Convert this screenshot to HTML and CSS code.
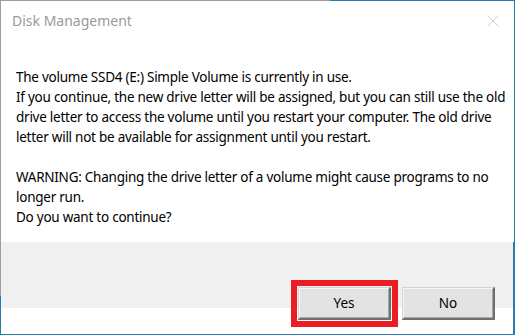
FILE: index.html
```html
<!DOCTYPE html>
<html>
<head>
<meta charset="utf-8">
<link rel="stylesheet" href="styles.css">
</head>
<body>
<div class="window">
  <div class="titlebar">
    <span class="title">Disk Management</span>
    <svg class="close" width="12" height="12" viewBox="0 0 12 12"><path d="M0.5 0.5 L11.5 11.5 M11.5 0.5 L0.5 11.5" stroke="#cfcfcf" stroke-width="1" fill="none"/></svg>
  </div>
  <div class="message">
    <p>The volume SSD4 (E:) Simple Volume is currently in use.<br>If you continue, the new drive letter will be assigned, but you can still use the old<br>drive letter to access the volume until you restart your computer. The old drive<br>letter will not be available for assignment until you restart.</p>
    <p>WARNING: Changing the drive letter of a volume might cause programs to no<br>longer run.<br>Do you want to continue?</p>
  </div>
  <div class="footer">
    <button class="btn btn-marked">Yes</button>
    <button class="btn">No</button>
  </div>
</div>
</body>
</html>
```
FILE: styles.css
```css
* { box-sizing: border-box; }
html, body { margin: 0; padding: 0; background: #fff; }
body { font-family: "Noto Sans", "Open Sans", sans-serif; }
.window {
  width: 515px;
  height: 335px;
  padding: 1px 1px 1px 1px;
  background:
    linear-gradient(#9e9e9e, #9e9e9e) top left / 330px 1px no-repeat,
    linear-gradient(#9e9e9e, #9e9e9e) top left / 1px 296px no-repeat,
    #2a7bb0;
  display: flex;
  flex-direction: column;
}
.window > * { background: #fff; }
.titlebar {
  height: 38px;
  display: flex;
  align-items: center;
  justify-content: space-between;
  padding: 0 15px 0 11px;
}
.title {
  font-size: 14px;
  color: #9a9a9a;
}
.close { margin-top: 2px; }
.message {
  padding: 28px 0 0 15px;
  font-size: 13.5px;
  letter-spacing: -0.25px;
  line-height: 20px;
  color: #000;
  white-space: nowrap;
  height: 203px;
}
.message p { margin: 0 0 20px 0; }
.footer {
  flex: 1;
  display: flex;
  justify-content: flex-end;
  align-items: flex-start;
  gap: 11px;
  padding: 45px 18px 0 0;
  margin-right: 1px;
  background: linear-gradient(#f0f0f0 0 66px, #fff 66px) !important;
}
.btn {
  width: 93px;
  height: 33px;
  font-family: inherit;
  font-size: 13.5px;
  color: #000;
  background: #e3e3e3;
  border-style: solid;
  border-width: 1px 2px 2px 1px;
  border-color: #d4d4d4 #6f6f6f #6f6f6f #d4d4d4;
  box-shadow: inset 1px 1px 0 #f4f4f4, inset -1px -1px 0 #a8a8a8;
  padding: 0;
}
.btn-marked {
  outline: 6px solid #ec1c24;
  outline-offset: 1px;
}
```
